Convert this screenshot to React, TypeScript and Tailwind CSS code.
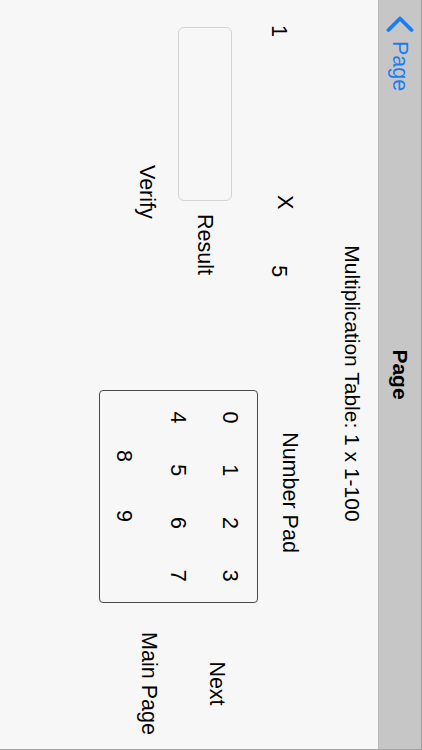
import React from 'react';

const digitRows = [
  ['0', '1', '2', '3'],
  ['4', '5', '6', '7'],
];

const BackChevron = () => (
  <svg width="18" height="28" viewBox="0 0 18 28" fill="none">
    <polyline
      points="15,2.5 3.5,14 15,25.5"
      stroke="#1a7cf5"
      strokeWidth="3.8"
      strokeLinecap="round"
      strokeLinejoin="round"
    />
  </svg>
);

const NavBar = () => (
  <header className="h-[44px] shrink-0 grid grid-cols-[1fr_auto_1fr] items-center bg-[#c6c6c6] border-t border-[#a0a0a0] border-b border-b-[#b7b7b7]">
    <button className="flex items-center gap-[8px] pl-[15px] text-[21.5px] leading-[24px] text-[#1a7cf5] justify-self-start">
      <BackChevron />
      <span>Page</span>
    </button>
    <span className="text-[21px] leading-[24px] font-bold">Page</span>
    <div />
  </header>
);

const LeftColumn = () => (
  <div className="w-[390px] flex flex-col">
    <div className="mt-[43px] flex items-start">
      <span className="ml-[25px] mt-[6px]">1</span>
      <button className="ml-[158px]">X</button>
      <span className="ml-[56px] mt-[6px]">5</span>
    </div>
    <div className="mt-[35px] flex items-center">
      <div className="ml-[27px] w-[174px] h-[54px] rounded-[6px] border border-[#d3d3d3] bg-[#f7f7f7]" />
      <span className="ml-[13px]">Result</span>
    </div>
    <button className="mt-[19px] ml-[165px] self-start">Verify</button>
  </div>
);

const KeypadColumn = () => (
  <div className="w-[213px] flex flex-col">
    <span className="mt-[38px] pr-[8px] text-center">Number Pad</span>
    <div className="mt-[20px] h-[159px] rounded-[4px] border border-[#4a4a4a] flex flex-col">
      {digitRows.map((row, i) => (
        <div key={i} className={i === 0 ? 'mt-[15px] flex' : 'mt-[28px] flex'}>
          {row.map((d) => (
            <button key={d} className="w-[53px] text-center">
              {d}
            </button>
          ))}
        </div>
      ))}
      <div className="mt-[30px] flex pl-[35px]">
        <button className="w-[60px] text-center">8</button>
        <button className="w-[60px] text-center">9</button>
      </div>
    </div>
  </div>
);

const NavColumn = () => (
  <div className="flex-1 flex flex-col items-center pl-[15px]">
    <button className="mt-[111px]">Next</button>
    <button className="mt-[44px]">Main Page</button>
  </div>
);

export default function App() {
  return (
    <div className="w-[422px] h-[750px] overflow-hidden bg-[#f7f7f7] font-['Liberation_Sans',Arial,sans-serif] text-black">
      {/* landscape screen, turned a quarter clockwise */}
      <div className="w-[750px] h-[422px] origin-top-left rotate-90 translate-x-[422px] flex flex-col bg-[#f7f7f7] border-r border-[#a3a3a3]">
        <NavBar />
        <main className="flex-1 flex flex-col text-[21.5px] leading-[24px]">
          <h1 className="mt-[14px] pl-[18px] text-center text-[21px]">Multiplication Table: 1 x 1-100</h1>
          <div className="flex">
            <LeftColumn />
            <KeypadColumn />
            <NavColumn />
          </div>
        </main>
      </div>
    </div>
  );
}
